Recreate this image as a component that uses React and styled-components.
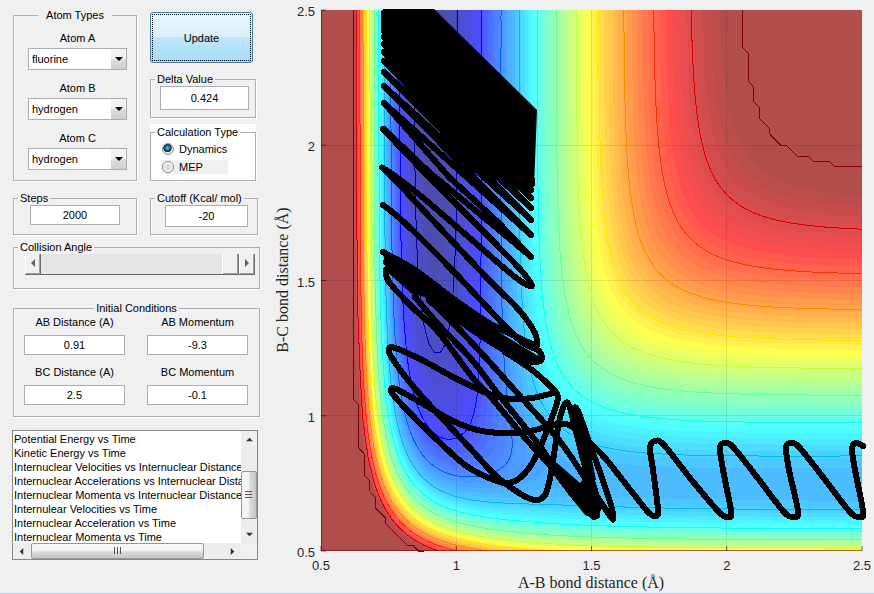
import React, { useState } from 'react';
import styled, { createGlobalStyle } from 'styled-components'

const GlobalStyle = createGlobalStyle`
* {
  box-sizing: border-box;
}
body {
  margin: 0;
  background: #F0F0F0;
  color: #000;
  font-family: "Liberation Sans", Arial, sans-serif;
  font-size: 11px;
  line-height: 14px;
}
button, input, select {
  font: inherit;
  color: inherit;
}
`

const Page = styled.main`
display: flex;
align-items: flex-start;
min-height: 100vh;
border-bottom: 1px solid #B9CDE5;
`

const Controls = styled.form`
flex: 0 0 270px;
display: flex;
flex-direction: column;
padding: 9px 10px 0 13px;
`

const Columns = styled.div`
display: grid;
grid-template-columns: 124px 1fr;
column-gap: 13px;
padding-right: 2px;
margin-bottom: ${props => props.$space}px;
`

const Stack = styled.div`
display: flex;
flex-direction: column;
padding: 3px 2px 0 0;
`

const Group = styled.fieldset`
margin: 0 0 ${props => props.$space || 0}px;
min-width: 0;
height: ${props => props.$height};
padding: 0;
border: 1px solid #ABADB3;
box-shadow: 1px 1px 0 #FFF, inset 1px 0 0 #FFF;
`

const Legend = styled.legend`
padding: 0 ${props => props.$wide ? 8 : 2}px;
margin: 0 ${props => props.$center ? 'auto' : '4px'};
line-height: 12px;
white-space: nowrap;
`

const GroupBody = styled.div`
padding: ${props => props.$pad};
`

const Fields = styled.div`
display: flex;
flex-direction: column;
gap: 11px;
`

const FieldGrid = styled.div`
display: grid;
grid-template-columns: 1fr 1fr;
gap: 10px 22px;
`

const Field = styled.label`
display: flex;
flex-direction: column;
align-items: stretch;
gap: ${props => props.$gap || 3}px;
text-align: center;
`

const TextBox = styled.input`
display: block;
width: 100%;
height: ${props => props.$height || 20}px;
padding: 0;
border: 1px solid #ABADB3;
background: #FFF;
text-align: center;
`

const ComboWrapper = styled.span`
position: relative;
display: block;
`

const Combo = styled.select`
appearance: none;
display: block;
width: 100%;
height: 22px;
padding: 0 20px 0 3px;
border: 1px solid #ABADB3;
border-radius: 0;
background: #FFF;
`

const ComboArrow = styled.span`
position: absolute;
top: 1px;
right: 1px;
bottom: 1px;
width: 15px;
display: flex;
align-items: center;
justify-content: center;
background: linear-gradient(#F2F2F2 50%, #DDD 50%, #CFCFCF);
pointer-events: none;
`

const UpdateButton = styled.button`
height: 51px;
margin-bottom: 10px;
margin-right: 3px;
padding: 1px;
border: 1px solid #3C7FB1;
border-radius: 3px;
background: linear-gradient(#EAF6FD, #D9F0FC 48%, #BEE6FD 50%, #A7D9F5);
`

const FocusRing = styled.span`
display: flex;
align-items: center;
justify-content: center;
height: 100%;
border: 1px dotted #000;
`

const WhitePanel = styled.div`
padding-top: 2px;
height: 58px;
background: #FFF;
`

const RadioLabel = styled.label`
display: flex;
align-items: center;
gap: 5px;
width: 67px;
height: 14px;
margin-bottom: 4px;
background: ${props => props.$grey ? '#F0F0F0' : 'transparent'};
`

const Radio = styled.input`
appearance: none;
flex: none;
width: 12px;
height: 12px;
margin: 0 0 0 1px;
border: 1px solid #8E8F8F;
border-radius: 50%;
background: radial-gradient(#DDD 35%, #F6F6F6 60%);

&:checked {
  background: radial-gradient(circle at 45% 40%, #7FD0F0, #1C5A80 30%, #0B2F4C 48%, #E8EEF2 55%);
}
`

const SliderRow = styled.div`
display: flex;
height: 21px;
border-bottom: 1px solid #696969;
`

const StepButton = styled.button`
flex: none;
display: flex;
align-items: center;
justify-content: center;
width: 16px;
padding: 0 0 2px;
border: 0;
border-left: 1px solid #FFF;
border-right: 1px solid #696969;
box-shadow: inset -1px -1px 0 #A0A0A0;
background: #F0F0F0;
`

const Slider = styled.input`
appearance: none;
flex: 1 1 auto;
min-width: 0;
height: 20px;
margin: 0;
background: #E5E5E5;

&::-webkit-slider-thumb {
  appearance: none;
  width: 17px;
  height: 20px;
  border-left: 1px solid #FFF;
  border-right: 1px solid #696969;
  box-shadow: inset -1px -1px 0 #A0A0A0;
  background: #F0F0F0;
}
`

const ListFrame = styled.div`
display: grid;
grid-template-columns: 1fr 16px;
grid-template-rows: 112px 16px;
height: 130px;
margin-left: -1px;
margin-right: 2px;
border: 1px solid #828790;
background: #F0F0F0;
`

const List = styled.select`
width: 100%;
height: 112px;
min-width: 0;
padding: 2px 0 0;
border: 0;
border-radius: 0;
outline: 0;
overflow: hidden;
background: #FFF;

option {
  min-height: 14px;
  height: 14px;
  padding: 0 1px;
  line-height: 14px;
  white-space: nowrap;
}
`

const ScrollBar = styled.div`
display: flex;
flex-direction: ${props => props.$vertical ? 'column' : 'row'};
align-items: stretch;
background: #EDEDED;
`

const ScrollEnd = styled.span`
flex: 0 0 17px;
display: flex;
align-items: center;
justify-content: center;
`

const ScrollGap = styled.span`
flex: ${props => props.$grow} 1 0;
`

const ScrollThumb = styled.span`
flex: 0 0 ${props => props.$size}px;
display: flex;
align-items: center;
justify-content: center;
border: 1px solid #979797;
border-radius: 2px;
background: linear-gradient(${props => props.$vertical ? '90deg' : '180deg'}, #F5F5F5 45%, #DCDCDE 55%, #C4C5C9);
`

const ChartArea = styled.section`
flex: 1 1 0;
min-width: 0;
`

const ChartSvg = styled.svg`
display: block;
width: 100%;
height: auto;
`

const TickText = styled.text`
font-family: "Liberation Sans", Arial, sans-serif;
font-size: 13px;
fill: #262626;
`

const AxisText = styled.text`
font-family: "Liberation Serif", "Times New Roman", serif;
font-size: 16px;
fill: #262626;
text-anchor: middle;
`

/* potential energy surface, kcal/mol */
const CUTOFF = -22.5
const LOWEST = -141.2
const OVERLAP = 0.424 * 0.424
const HF = { d: 141.196, beta: 2.2187, re: 0.917 }
const HH = { d: 109.449, beta: 1.942, re: 0.7419 }

function terms ({ d, beta, re }, r) {
  const e = Math.exp(-beta * (r - re))
  return {
    q: d / 4 * ((3 + OVERLAP) * e * e - (2 + 6 * OVERLAP) * e),
    j: d / 4 * ((1 + 3 * OVERLAP) * e * e - (6 + 2 * OVERLAP) * e)
  }
}

function potential (x, y) {
  const a = terms(HF, x)
  const b = terms(HH, y)
  const c = terms(HF, x + y)
  const root = Math.sqrt(((a.j - b.j) ** 2 + (b.j - c.j) ** 2 + (c.j - a.j) ** 2) / 2)
  return Math.min(CUTOFF, (a.q + b.q + c.q - root) / (1 + OVERLAP))
}

const N = 100
const LEFT = 321
const TOP = 10
const SIZE = 541
const px = i => LEFT + i * SIZE / N
const py = j => TOP + SIZE - j * SIZE / N

const grid = Array.from({ length: N + 1 }, (_, j) =>
  Array.from({ length: N + 1 }, (_, i) => potential(0.5 + i * 0.02, 0.5 + j * 0.02)))

const point = p => p[0].toFixed(2) + ' ' + p[1].toFixed(2)

function contour (level) {
  let fill = ''
  let line = ''
  for (let j = 0; j < N; j++) {
    let run = -1
    for (let i = 0; i <= N; i++) {
      const corners = i < N ? [[i, j], [i + 1, j], [i + 1, j + 1], [i, j + 1]] : []
      const inside = corners.filter(c => grid[c[1]][c[0]] >= level).length
      if (inside === 4) {
        if (run < 0) run = i
        continue
      }
      if (run >= 0) {
        fill += `M${px(run).toFixed(2)} ${py(j).toFixed(2)}H${px(i).toFixed(2)}V${py(j + 1).toFixed(2)}H${px(run).toFixed(2)}Z`
        run = -1
      }
      if (!inside) continue
      const shape = []
      const cuts = []
      corners.forEach((c, k) => {
        const n = corners[(k + 1) % 4]
        const v = grid[c[1]][c[0]]
        const w = grid[n[1]][n[0]]
        if (v >= level) shape.push([px(c[0]), py(c[1])])
        if ((v >= level) !== (w >= level)) {
          const t = (level - v) / (w - v)
          const cut = [px(c[0] + t * (n[0] - c[0])), py(c[1] + t * (n[1] - c[1]))]
          shape.push(cut)
          cuts.push(cut)
        }
      })
      fill += 'M' + shape.map(point).join('L') + 'Z'
      if (cuts.length === 2) line += 'M' + cuts.map(point).join('L')
    }
  }
  return { fill, line }
}

function jet (t, alpha) {
  const channel = mid => {
    const c = Math.max(0, Math.min(1, 1.5 - Math.abs(4 * t - mid)))
    return Math.round(255 * (c * alpha + 1 - alpha))
  }
  return `rgb(${channel(3)}, ${channel(2)}, ${channel(1)})`
}

const BANDS = 64
const bands = Array.from({ length: BANDS - 1 }, (_, k) => ({
  color: jet(Math.min(0.985, (k + 2) / BANDS), 0.7),
  path: contour(LOWEST + (k + 1) * (CUTOFF - LOWEST) / BANDS).fill
}))

const levels = Array.from({ length: 12 }, (_, k) => {
  const value = k === 11 ? CUTOFF - 0.001 : -136.6 + 10.42 * k
  return { color: jet((value - LOWEST) / (CUTOFF - LOWEST), 1), path: contour(value).line }
})

/* smooth curve through the listed points */
function curve (points) {
  let d = 'M' + points[0].join(' ')
  for (let i = 0; i < points.length - 1; i++) {
    const a = points[i - 1] || points[i]
    const b = points[i]
    const c = points[i + 1]
    const e = points[i + 2] || c
    d += `C${point([b[0] + (c[0] - a[0]) / 6, b[1] + (c[1] - a[1]) / 6])} ${point([c[0] - (e[0] - b[0]) / 6, c[1] - (e[1] - b[1]) / 6])} ${c.join(' ')}`
  }
  return d
}

const orbits = [
  [[505, 352], [532, 370], [549, 385], [557, 394], [557, 403], [549, 425], [539, 450], [529, 468], [517, 480], [505, 483], [489, 478], [465, 465], [432, 435], [405, 408], [392, 393], [393, 388], [402, 392], [425, 405], [455, 422], [482, 431], [512, 433], [535, 430], [552, 425], [569, 425], [587, 440], [605, 458], [632, 492], [648, 512], [655, 516], [658, 510], [653, 470], [650, 448], [655, 441], [664, 445], [690, 478], [718, 511], [728, 517], [731, 511], [723, 470], [720, 448], [724, 443], [733, 447], [760, 481], [784, 512], [794, 517], [798, 511], [789, 470], [786, 448], [790, 443], [799, 447], [826, 481], [850, 512], [860, 517], [863, 511], [855, 470], [852, 449], [856, 443], [863, 446]],
  [[554, 393], [532, 398], [512, 399], [489, 394], [455, 378], [422, 360], [395, 348], [389, 349], [392, 358], [412, 385], [439, 415], [469, 447], [495, 475], [519, 493], [535, 500], [545, 495], [550, 478], [555, 448], [559, 422], [565, 404], [570, 408], [580, 448], [592, 492], [597, 516]],
  [[386, 270], [389, 282], [412, 307], [439, 333], [472, 377], [489, 395], [525, 438], [552, 468], [575, 498], [594, 517]],
  [[415, 297], [439, 325], [472, 360], [499, 395], [539, 445], [565, 483], [590, 512]],
  [[429, 300], [455, 325], [485, 357], [519, 395], [559, 440], [585, 478], [610, 516], [613, 517], [611, 505], [601, 475], [589, 442], [578, 411], [574, 413], [585, 458], [597, 498], [597, 515]],
  [[383, 252], [415, 270], [455, 300], [489, 323], [519, 338], [535, 345]],
  [[386, 262], [409, 280], [449, 313], [492, 343], [525, 360], [540, 361], [539, 351], [516, 337], [455, 273], [405, 223], [383, 205]],
  [[537, 345], [535, 333], [519, 310], [489, 280], [439, 227], [397, 182], [383, 168], [422, 197], [472, 240], [515, 277], [532, 286], [519, 268], [472, 220], [422, 170], [383, 129]]
]

const zigzag = [[384, 129], [429, 172], [505, 235], [531, 257], [499, 223], [449, 177], [384, 103], [531, 235], [384, 86], [531, 220], [384, 72], [531, 208], [384, 61], [531, 198], [384, 52], [531, 190], [384, 44], [532, 184], [384, 37], [532, 180], [384, 31], [384, 25], [384, 13]]

const solids = [
  'M383 9H434L537 110L534 186L515 185L500 182L475 171L461 154L420 112L395 72L384 55Z',
  'M383 252L409 267L426 280L445 293L475 316L505 336L540 357L541 364L525 362L492 346L455 320L430 298L412 294L386 271Z',
  'M550 462L557 463L580 483L586 476L592 485L599 512L595 519L585 515L566 491Z',
  'M573 412L581 410L588 440L596 480L590 480L582 455Z'
]

const ticks = [0.5, 1, 1.5, 2, 2.5]
const at = v => (v - 0.5) * SIZE / 2

function SurfaceChart () {
  return <ChartSvg viewBox="270 0 604 593" role="img" aria-label="Potential energy surface">
    <rect x={LEFT} y={TOP} width={SIZE} height={SIZE} fill={jet(1 / BANDS, 0.7)} shapeRendering="crispEdges" />
    <g shapeRendering="crispEdges">
      {bands.map((band, i) => <path key={i} d={band.path} fill={band.color} />)}
    </g>
    <g stroke="#000" strokeOpacity="0.1" shapeRendering="crispEdges">
      {ticks.slice(1, 4).map(v => <path key={v} d={`M${LEFT + at(v)} ${TOP}v${SIZE}M${LEFT} ${TOP + SIZE - at(v)}h${SIZE}`} />)}
    </g>
    <g fill="none" shapeRendering="crispEdges">
      {levels.map((level, i) => <path key={i} d={level.path} stroke={level.color} />)}
    </g>
    <path d={`M${LEFT + 0.5} ${TOP}V${TOP + SIZE - 0.5}H${LEFT + SIZE}`} fill="none" stroke="#800000" strokeOpacity="0.6" />
    <g stroke="#000" strokeOpacity="0.55">
      {ticks.map(v => <path key={v} d={`M${LEFT + at(v)} ${TOP + SIZE}v-5M${LEFT} ${TOP + SIZE - at(v)}h5`} />)}
    </g>
    <g fill="none" stroke="#000" strokeWidth="6" strokeLinecap="round" strokeLinejoin="round" shapeRendering="crispEdges">
      {orbits.map((orbit, i) => <path key={i} d={curve(orbit)} />)}
      <path d={'M' + zigzag.map(p => p.join(' ')).join('L')} />
    </g>
    {solids.map(d => <path key={d} d={d} />)}
    {ticks.map(v => <TickText key={'x' + v} x={LEFT + at(v)} y="570" textAnchor="middle">{v}</TickText>)}
    {ticks.map(v => <TickText key={'y' + v} x="315" y={TOP + SIZE - at(v) + 6} textAnchor="end">{v}</TickText>)}
    <AxisText x="591" y="588">A-B bond distance (Å)</AxisText>
    <AxisText transform="translate(288 280) rotate(-90)">B-C bond distance (Å)</AxisText>
  </ChartSvg>
}

const ATOMS = ['hydrogen', 'fluorine', 'chlorine', 'oxygen']
const PLOTS = [
  'Potential Energy vs Time',
  'Kinetic Energy vs Time',
  'Internuclear Velocities vs Internuclear Distance',
  'Internuclear Accelerations vs Internuclear Distance',
  'Internuclear Momenta vs Internuclear Distance',
  'Internulear Velocities vs Time',
  'Internuclear Acceleration vs Time',
  'Internuclear Momenta vs Time'
]

const ROTATION = { up: 180, down: 0, left: 90, right: 270 }

const Arrow = ({ dir, size = 8, color = '#333' }) => <svg width={size} height={size} viewBox="0 0 8 8" aria-hidden="true">
  <path d="M0 2H8L4 6Z" fill={color} transform={`rotate(${ROTATION[dir]} 4 4)`} />
</svg>

const Grip = ({ vertical }) => <svg width="8" height="8" viewBox="0 0 8 8" aria-hidden="true">
  <path d={vertical ? 'M0 .5H7M0 3.5H7M0 6.5H7' : 'M.5 0V7M3.5 0V7M6.5 0V7'} stroke="#555" fill="none" />
</svg>

function AtomField ({ label, initial }) {
  return <Field>
    {label}
    <ComboWrapper>
      <Combo defaultValue={initial}>
        {ATOMS.map(atom => <option key={atom}>{atom}</option>)}
      </Combo>
      <ComboArrow><Arrow dir="down" color="#000" /></ComboArrow>
    </ComboWrapper>
  </Field>
}

export default function App () {
  const [angle, setAngle] = useState(180)

  return <>
    <GlobalStyle />
    <Page>
      <Controls onSubmit={e => e.preventDefault()}>
        <Columns $space={10}>
          <Group $height="172px">
            <Legend $center $wide>Atom Types</Legend>
            <GroupBody $pad="10px 9px 0 14px">
              <Fields>
                <AtomField label="Atom A" initial="fluorine" />
                <AtomField label="Atom B" initial="hydrogen" />
                <AtomField label="Atom C" initial="hydrogen" />
              </Fields>
            </GroupBody>
          </Group>
          <Stack>
            <UpdateButton type="submit"><FocusRing>Update</FocusRing></UpdateButton>
            <Group $height="45px" $space={6}>
              <Legend>Delta Value</Legend>
              <GroupBody $pad="1px 6px 0 9px">
                <TextBox aria-label="Delta Value" defaultValue="0.424" $height={24} />
              </GroupBody>
            </Group>
            <WhitePanel>
              <Group $height="55px">
                <Legend>Calculation Type</Legend>
                <GroupBody $pad="4px 0 0 10px">
                  <RadioLabel><Radio type="radio" name="calc" defaultChecked />Dynamics</RadioLabel>
                  <RadioLabel $grey><Radio type="radio" name="calc" />MEP</RadioLabel>
                </GroupBody>
              </Group>
            </WhitePanel>
          </Stack>
        </Columns>
        <Columns $space={6}>
          <Group $height="43px">
            <Legend>Steps</Legend>
            <GroupBody $pad="1px 16px 0">
              <TextBox aria-label="Steps" defaultValue="2000" />
            </GroupBody>
          </Group>
          <Group $height="43px">
            <Legend>Cutoff (Kcal/ mol)</Legend>
            <GroupBody $pad="1px 9px 0 14px">
              <TextBox aria-label="Cutoff (Kcal/ mol)" defaultValue="-20" $height={22} />
            </GroupBody>
          </Group>
        </Columns>
        <Group $height="48px" $space={13}>
          <Legend>Collision Angle</Legend>
          <GroupBody $pad="1px 4px 0 11px">
            <SliderRow>
              <StepButton type="button" aria-label="Decrease angle" onClick={() => setAngle(Math.max(0, angle - 1))}><Arrow dir="left" color="#606060" /></StepButton>
              <Slider type="range" min="0" max="180" aria-label="Collision Angle" value={angle} onChange={e => setAngle(+e.target.value)} />
              <StepButton type="button" aria-label="Increase angle" onClick={() => setAngle(Math.min(180, angle + 1))}><Arrow dir="right" color="#606060" /></StepButton>
            </SliderRow>
          </GroupBody>
        </Group>
        <Group $height="115px" $space={13}>
          <Legend $center>Initial Conditions</Legend>
          <GroupBody $pad="1px 11px 0 10px">
            <FieldGrid>
              <Field $gap={6}>AB Distance (A)<TextBox defaultValue="0.91" /></Field>
              <Field $gap={6}>AB Momentum<TextBox defaultValue="-9.3" /></Field>
              <Field $gap={6}>BC Distance (A)<TextBox defaultValue="2.5" /></Field>
              <Field $gap={6}>BC Momentum<TextBox defaultValue="-0.1" /></Field>
            </FieldGrid>
          </GroupBody>
        </Group>
        <ListFrame>
          <List size={8} aria-label="Plot type">
            {PLOTS.map(plot => <option key={plot}>{plot}</option>)}
          </List>
          <ScrollBar $vertical aria-hidden="true">
            <ScrollEnd><Arrow dir="up" size={7} /></ScrollEnd>
            <ScrollGap $grow={22} />
            <ScrollThumb $vertical $size={48}><Grip vertical /></ScrollThumb>
            <ScrollGap $grow={7} />
            <ScrollEnd><Arrow dir="down" size={7} /></ScrollEnd>
          </ScrollBar>
          <ScrollBar aria-hidden="true">
            <ScrollEnd><Arrow dir="left" size={7} /></ScrollEnd>
            <ScrollGap $grow={1} />
            <ScrollThumb $size={173}><Grip /></ScrollThumb>
            <ScrollGap $grow={18} />
            <ScrollEnd><Arrow dir="right" size={7} /></ScrollEnd>
          </ScrollBar>
        </ListFrame>
      </Controls>
      <ChartArea>
        <SurfaceChart />
      </ChartArea>
    </Page>
  </>
}
